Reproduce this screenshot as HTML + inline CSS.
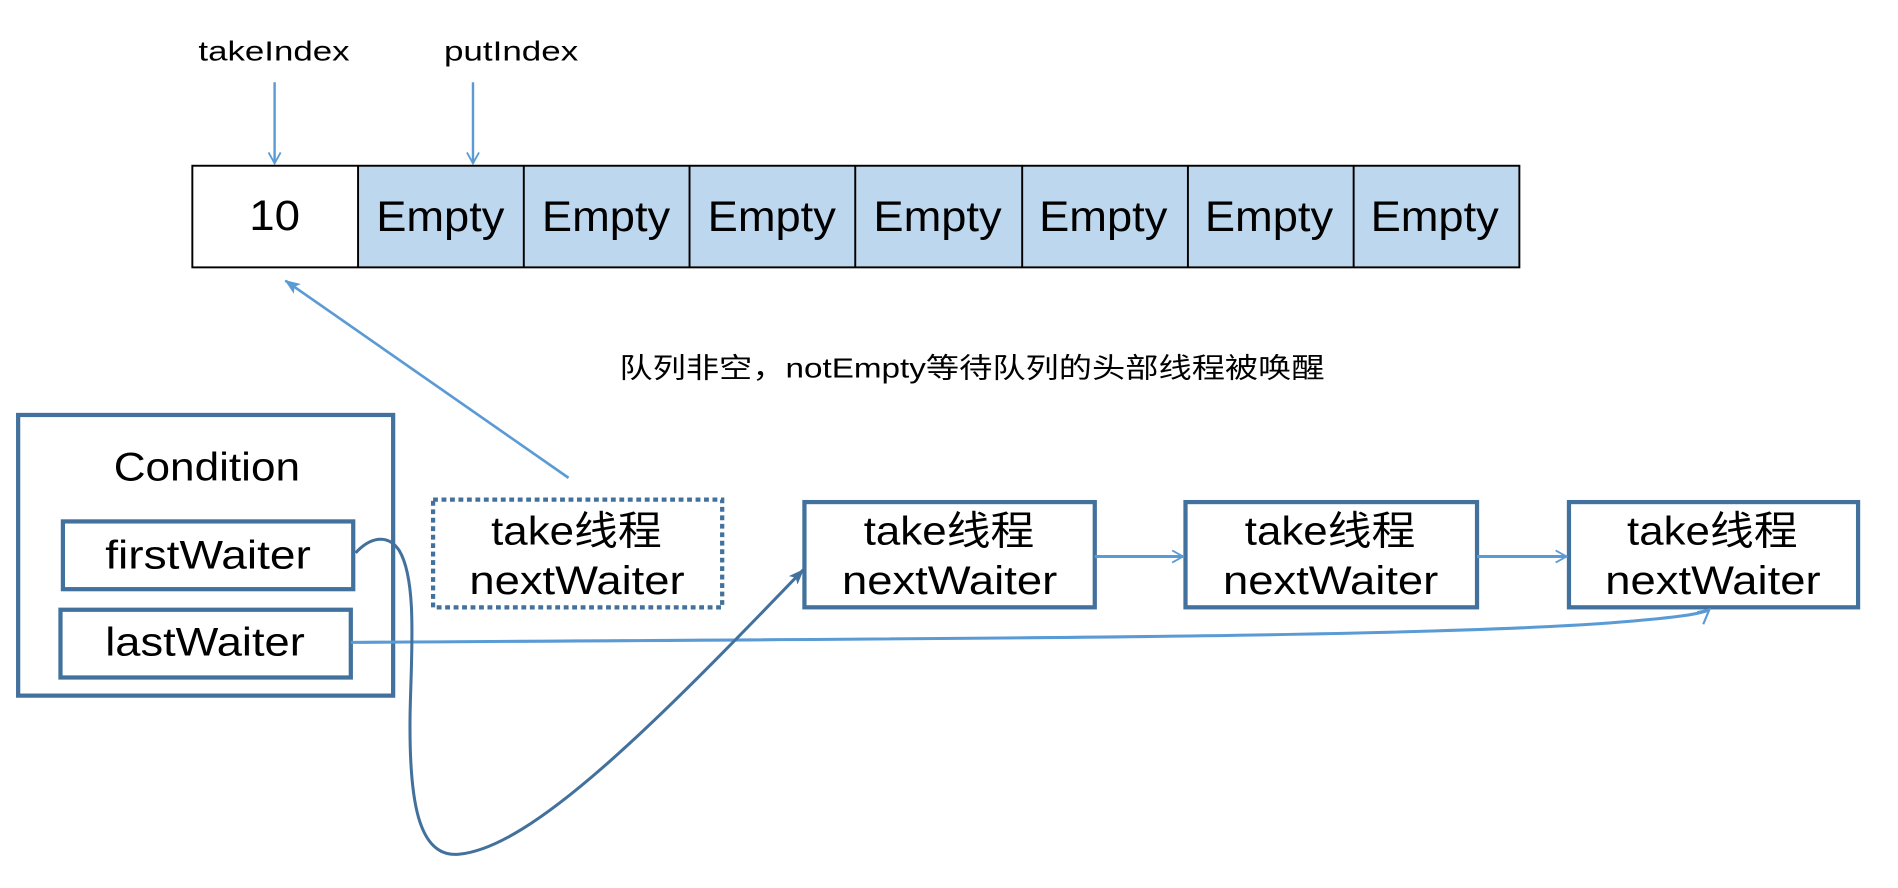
<!DOCTYPE html>
<html><head><meta charset="utf-8"><style>
html,body{margin:0;padding:0;background:#fff;width:1898px;height:888px;overflow:hidden}
svg{display:block}
text{font-family:"Liberation Sans","Noto Sans CJK SC",sans-serif;fill:#000}
</style></head><body>
<svg width="1898" height="888" viewBox="0 0 1569 734" preserveAspectRatio="none" xmlns="http://www.w3.org/2000/svg">
<defs>
<marker id="open" markerWidth="12" markerHeight="12" refX="10" refY="6" orient="auto" markerUnits="userSpaceOnUse">
<path d="M1,1 L10,6 L1,11" fill="none" stroke="#5b9bd5" stroke-width="1.5"/></marker>
<marker id="fill" markerWidth="14" markerHeight="12" refX="12" refY="6" orient="auto" markerUnits="userSpaceOnUse">
<path d="M0,1 L13,6 L0,11 L3,6 Z" fill="#5b9bd5"/></marker>
<marker id="fillD" markerWidth="14" markerHeight="12" refX="12" refY="6" orient="auto" markerUnits="userSpaceOnUse">
<path d="M0,1 L13,6 L0,11 L3,6 Z" fill="#41719c"/></marker>
</defs>
<text x="164" y="50" font-size="23" textLength="125" lengthAdjust="spacingAndGlyphs">takeIndex</text>
<text x="367" y="50" font-size="23" textLength="111" lengthAdjust="spacingAndGlyphs">putIndex</text>
<line x1="227" y1="68" x2="227" y2="135" stroke="#5b9bd5" stroke-width="2" marker-end="url(#open)"/>
<line x1="391" y1="68" x2="391" y2="135" stroke="#5b9bd5" stroke-width="2" marker-end="url(#open)"/>
<rect x="159" y="137" width="137" height="84" fill="#fff"/>
<rect x="296" y="137" width="960" height="84" fill="#bdd7ee"/>
<g stroke="#000" stroke-width="1.6" fill="none">
<rect x="159" y="137" width="1097" height="84"/>
<line x1="296" y1="137" x2="296" y2="221"/><line x1="433" y1="137" x2="433" y2="221"/>
<line x1="570" y1="137" x2="570" y2="221"/><line x1="707" y1="137" x2="707" y2="221"/>
<line x1="845" y1="137" x2="845" y2="221"/><line x1="982" y1="137" x2="982" y2="221"/>
<line x1="1119" y1="137" x2="1119" y2="221"/>
</g>
<g font-size="35">
<text x="206" y="190" textLength="42" lengthAdjust="spacingAndGlyphs">10</text>
<text x="311" y="191" textLength="106" lengthAdjust="spacingAndGlyphs">Empty</text>
<text x="448" y="191" textLength="106" lengthAdjust="spacingAndGlyphs">Empty</text>
<text x="585" y="191" textLength="106" lengthAdjust="spacingAndGlyphs">Empty</text>
<text x="722" y="191" textLength="106" lengthAdjust="spacingAndGlyphs">Empty</text>
<text x="859" y="191" textLength="106" lengthAdjust="spacingAndGlyphs">Empty</text>
<text x="996" y="191" textLength="106" lengthAdjust="spacingAndGlyphs">Empty</text>
<text x="1133" y="191" textLength="106" lengthAdjust="spacingAndGlyphs">Empty</text>
</g>
<line x1="470" y1="395" x2="236" y2="232" stroke="#5b9bd5" stroke-width="2.2" marker-end="url(#fill)"/>
<text x="512" y="312" font-size="23" textLength="583" lengthAdjust="spacingAndGlyphs">队列非空，notEmpty等待队列的头部线程被唤醒</text>
<g fill="none" stroke="#41719c" stroke-width="3.5">
<rect x="15" y="343" width="310" height="232"/>
<rect x="52" y="431" width="240" height="56"/>
<rect x="50" y="504" width="240" height="56"/>
<rect x="665" y="415" width="240" height="87"/>
<rect x="980" y="415" width="241" height="87"/>
<rect x="1297" y="415" width="239" height="87"/>
</g>
<rect x="358" y="413" width="239" height="89" fill="none" stroke="#41719c" stroke-width="3.5" stroke-dasharray="4,3"/>
<g font-size="33">
<text x="94" y="397" textLength="154" lengthAdjust="spacingAndGlyphs">Condition</text>
<text x="87" y="470" textLength="170" lengthAdjust="spacingAndGlyphs">firstWaiter</text>
<text x="87" y="542" textLength="165" lengthAdjust="spacingAndGlyphs">lastWaiter</text>
</g>
<g font-size="33">
<text x="406" y="450" textLength="141" lengthAdjust="spacingAndGlyphs">take线程</text><text x="388" y="491" textLength="178" lengthAdjust="spacingAndGlyphs">nextWaiter</text>
<text x="714" y="450" textLength="141" lengthAdjust="spacingAndGlyphs">take线程</text><text x="696" y="491" textLength="178" lengthAdjust="spacingAndGlyphs">nextWaiter</text>
<text x="1029" y="450" textLength="141" lengthAdjust="spacingAndGlyphs">take线程</text><text x="1011" y="491" textLength="178" lengthAdjust="spacingAndGlyphs">nextWaiter</text>
<text x="1345" y="450" textLength="141" lengthAdjust="spacingAndGlyphs">take线程</text><text x="1327" y="491" textLength="178" lengthAdjust="spacingAndGlyphs">nextWaiter</text>
</g>
<line x1="905" y1="460" x2="978" y2="460" stroke="#5b9bd5" stroke-width="2.5" marker-end="url(#open)"/>
<line x1="1221" y1="460" x2="1295" y2="460" stroke="#5b9bd5" stroke-width="2.5" marker-end="url(#open)"/>
<path d="M290,531 C700,528 1150,528 1330,515 C1380,511 1405,508 1413,504" fill="none" stroke="#5b9bd5" stroke-width="2.5"/>
<path d="M1403,506 L1413,504 L1408,516" fill="none" stroke="#5b9bd5" stroke-width="1.8"/>
<path d="M294,457 C305,445 320,440 330,455 C345,480 340,540 339,590 C338,660 345,710 380,706 C440,700 540,600 664,471" fill="none" stroke="#41719c" stroke-width="2.5" marker-end="url(#fillD)"/>
</svg>
</body></html>
